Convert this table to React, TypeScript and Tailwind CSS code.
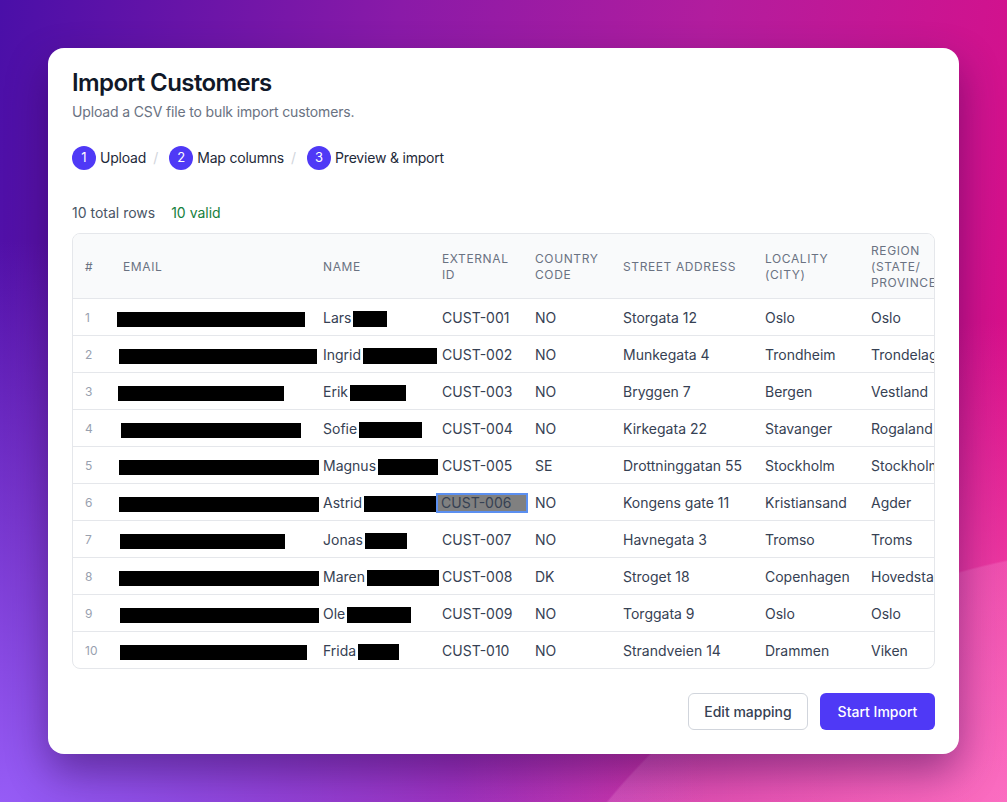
type Row = {
  n: number;
  emailOffset: number;
  emailWidth: number;
  first: string;
  lastWidth: number;
  id: string;
  country: string;
  street: string;
  city: string;
  region: string;
};

const rows: Row[] = [
  { n: 1, emailOffset: -6, emailWidth: 188, first: 'Lars', lastWidth: 34, id: 'CUST-001', country: 'NO', street: 'Storgata 12', city: 'Oslo', region: 'Oslo' },
  { n: 2, emailOffset: -4, emailWidth: 198, first: 'Ingrid', lastWidth: 74, id: 'CUST-002', country: 'NO', street: 'Munkegata 4', city: 'Trondheim', region: 'Trondelag' },
  { n: 3, emailOffset: -5, emailWidth: 166, first: 'Erik', lastWidth: 56, id: 'CUST-003', country: 'NO', street: 'Bryggen 7', city: 'Bergen', region: 'Vestland' },
  { n: 4, emailOffset: -2, emailWidth: 180, first: 'Sofie', lastWidth: 63, id: 'CUST-004', country: 'NO', street: 'Kirkegata 22', city: 'Stavanger', region: 'Rogaland' },
  { n: 5, emailOffset: -4, emailWidth: 200, first: 'Magnus', lastWidth: 60, id: 'CUST-005', country: 'SE', street: 'Drottninggatan 55', city: 'Stockholm', region: 'Stockholm' },
  { n: 6, emailOffset: -4, emailWidth: 200, first: 'Astrid', lastWidth: 74, id: 'CUST-006', country: 'NO', street: 'Kongens gate 11', city: 'Kristiansand', region: 'Agder' },
  { n: 7, emailOffset: -3, emailWidth: 165, first: 'Jonas', lastWidth: 42, id: 'CUST-007', country: 'NO', street: 'Havnegata 3', city: 'Tromso', region: 'Troms' },
  { n: 8, emailOffset: -4, emailWidth: 200, first: 'Maren', lastWidth: 72, id: 'CUST-008', country: 'DK', street: 'Stroget 18', city: 'Copenhagen', region: 'Hovedstaden' },
  { n: 9, emailOffset: -3, emailWidth: 199, first: 'Ole', lastWidth: 64, id: 'CUST-009', country: 'NO', street: 'Torggata 9', city: 'Oslo', region: 'Oslo' },
  { n: 10, emailOffset: -3, emailWidth: 187, first: 'Frida', lastWidth: 41, id: 'CUST-010', country: 'NO', street: 'Strandveien 14', city: 'Drammen', region: 'Viken' },
];

function Step({ n, label }: { n: number; label: string }) {
  return (
    <div className="flex items-center gap-1">
      <span className="flex h-6 w-6 items-center justify-center rounded-full bg-[#4f39f6] text-[13px] text-white">
        {n}
      </span>
      <span className="text-sm tracking-[-0.2px] text-gray-800">{label}</span>
    </div>
  );
}

function Sep() {
  return <span className="ml-[7px] mr-[11px] text-sm text-gray-300">/</span>;
}

export default function App() {
  return (
    <div
      className="min-h-screen p-12 font-['Inter','Liberation_Sans',sans-serif] [background-image:radial-gradient(circle_705px_at_1150px_1250px,rgba(255,170,230,0.22)_99.7%,transparent_100%),radial-gradient(ellipse_70%_70%_at_0%_100%,rgba(150,92,246,1),transparent_100%),radial-gradient(ellipse_55%_60%_at_100%_100%,rgba(250,92,182,1),transparent_100%),linear-gradient(100deg,#4a0fa8_0%,#8a1aa8_35%,#b21d9e_62%,#e00d86_100%)]"
    >
      <div className="rounded-2xl bg-white px-6 pb-6 pt-[19px] shadow-[0_18px_40px_rgba(40,0,70,0.45)]">
        <h1 className="text-2xl font-semibold leading-8 tracking-tight text-gray-900">Import Customers</h1>
        <p className="mt-[3px] text-sm tracking-[-0.15px] text-gray-500">
          Upload a CSV file to bulk import customers.
        </p>

        <div className="mt-6 flex items-center">
          <Step n={1} label="Upload" />
          <Sep />
          <Step n={2} label="Map columns" />
          <Sep />
          <Step n={3} label="Preview & import" />
        </div>

        <div className="mt-[33px] flex gap-4 text-sm">
          <span className="text-gray-600">10 total rows</span>
          <span className="text-[#15803d]">10 valid</span>
        </div>

        <div className="mt-[10px] overflow-hidden rounded-lg border border-gray-200">
          <table className="w-[916px] table-fixed border-collapse text-left">
            <colgroup>
              <col className="w-[38px]" />
              <col className="w-[200px]" />
              <col className="w-[119px]" />
              <col className="w-[93px]" />
              <col className="w-[88px]" />
              <col className="w-[142px]" />
              <col className="w-[106px]" />
              <col className="w-[130px]" />
            </colgroup>
            <thead className="bg-gray-50">
              <tr className="text-xs uppercase leading-4 tracking-wider text-gray-500">
                <th className="px-3 pb-[7px] pt-[9px] font-normal">#</th>
                <th className="px-3 pb-[7px] pt-[9px] font-normal">Email</th>
                <th className="px-3 pb-[7px] pt-[9px] font-normal">Name</th>
                <th className="px-3 pb-[7px] pt-[9px] font-normal">External ID</th>
                <th className="px-3 pb-[7px] pt-[9px] font-normal">Country code</th>
                <th className="px-3 pb-[7px] pt-[9px] font-normal">Street address</th>
                <th className="px-3 pb-[7px] pt-[9px] font-normal">Locality (city)</th>
                <th className="whitespace-nowrap px-3 pb-[7px] pt-[9px] font-normal">
                  Region
                  <br />
                  (State/
                  <br />
                  Province)
                </th>
              </tr>
            </thead>
            <tbody className="text-sm text-gray-700">
              {rows.map((r) => (
                <tr key={r.n} className="border-t border-gray-200">
                  <td className="px-3 pb-[7px] pt-[9px] text-xs text-gray-400">{r.n}</td>
                  <td className="px-3 pb-[7px] pt-[9px]">
                    <span
                      className="inline-block h-[15px] bg-black align-middle"
                      style={{ marginLeft: r.emailOffset, width: r.emailWidth }}
                    />
                  </td>
                  <td className="whitespace-nowrap px-3 pb-[7px] pt-[9px]">
                    {r.first}
                    <span
                      className="ml-[2px] inline-block h-4 bg-black align-middle"
                      style={{ width: r.lastWidth }}
                    />
                  </td>
                  <td className="whitespace-nowrap px-3 pb-[7px] pt-[9px]">
                    {r.n === 6 ? (
                      <span className="-ml-[6px] inline-block w-[92px] border-2 border-[#5b8ff0] bg-[#808080] pl-[3px] leading-4">
                        {r.id}
                      </span>
                    ) : (
                      r.id
                    )}
                  </td>
                  <td className="px-3 pb-[7px] pt-[9px]">{r.country}</td>
                  <td className="whitespace-nowrap px-3 pb-[7px] pt-[9px]">{r.street}</td>
                  <td className="whitespace-nowrap px-3 pb-[7px] pt-[9px]">{r.city}</td>
                  <td className="whitespace-nowrap px-3 pb-[7px] pt-[9px]">{r.region}</td>
                </tr>
              ))}
            </tbody>
          </table>
        </div>

        <div className="mt-6 flex justify-end gap-3">
          <button className="h-[37px] w-[120px] rounded-md border border-gray-300 bg-white text-sm font-medium text-gray-700">
            Edit mapping
          </button>
          <button className="h-[37px] w-[115px] rounded-md bg-[#4f39f6] text-sm font-medium text-white">
            Start Import
          </button>
        </div>
      </div>
    </div>
  );
}
